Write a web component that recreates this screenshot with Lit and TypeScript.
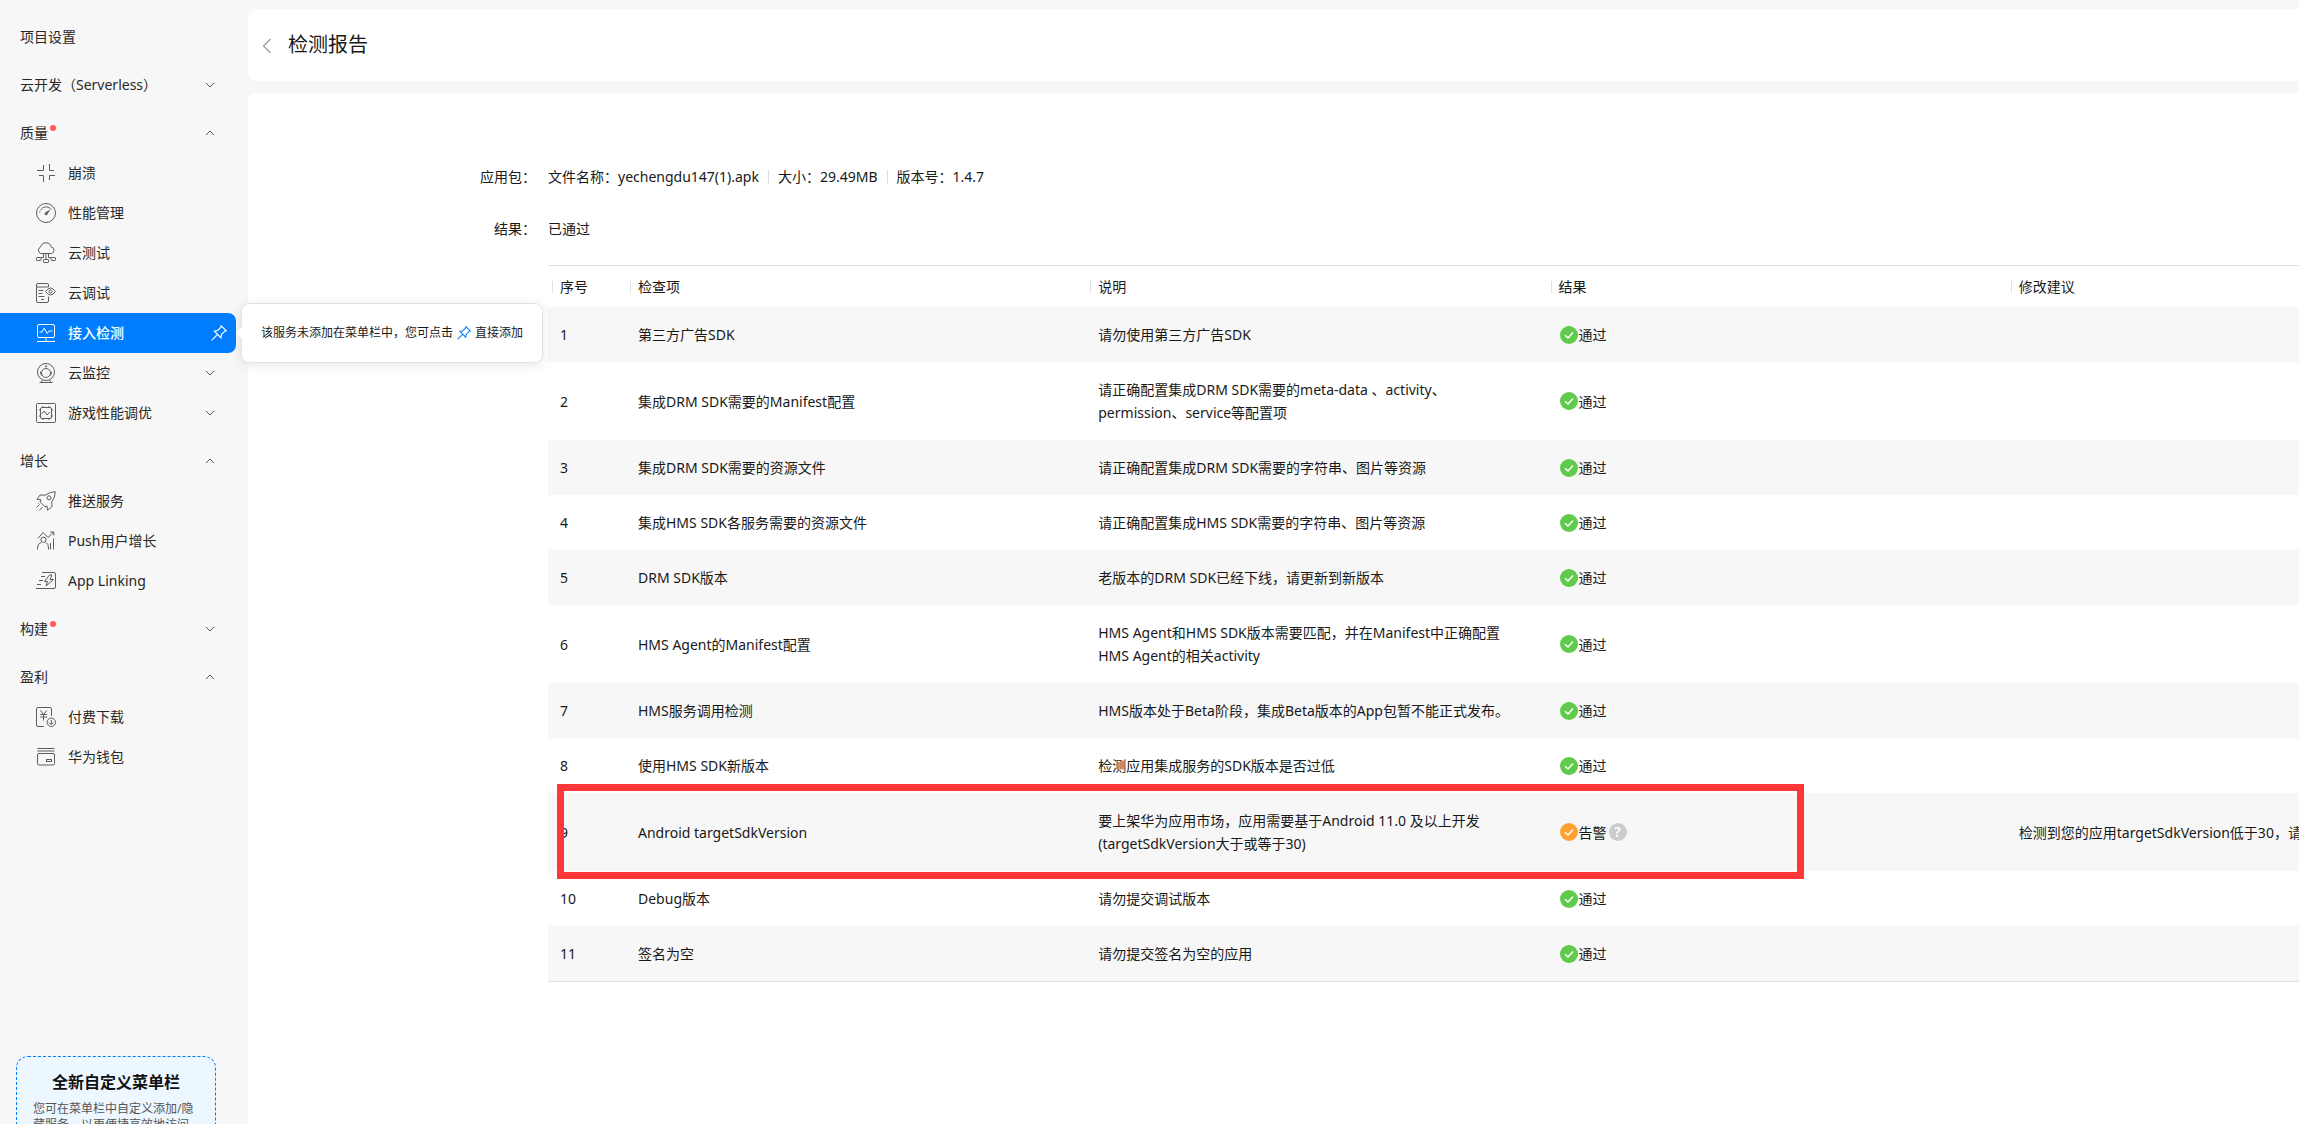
import { LitElement, html, svg, css, nothing, TemplateResult } from "lit";
import { customElement } from "lit/decorators.js";
import { classMap } from "lit/directives/class-map.js";

const icons: Record<string, TemplateResult> = {
  crash: svg`<path d="M1 7.5H7.5V2M13.5 1V7.5H18M3 12.5H7.5V19M19 12.5H13.5V17"/>`,
  gauge: svg`<circle cx="10" cy="10" r="9.5"/><path d="M4.6 7.2A6.4 6.4 0 0 1 15.4 6.6"/><path d="M3.6 9.6L4 8.4"/><path d="M14.4 6.4L9.4 9.2L11.2 11.6Z" fill="currentColor" stroke="none"/><circle cx="10" cy="10.8" r="1.4" fill="currentColor" stroke="none"/>`,
  cloudTest: svg`<path d="M4.6 10.5A3.6 3.6 0 0 1 4.7 3.9A5.4 5.4 0 0 1 15.2 3.9A3.4 3.4 0 0 1 15.6 10.5Z"/><path d="M10 10.5V16.4M7.5 10.5V14.5H5M12.5 10.5V14.5H15"/><rect x=".5" y="14.5" width="4.5" height="3" rx=".6"/><rect x="7.5" y="16.5" width="5" height="3" rx=".6"/><rect x="15" y="14.5" width="4.5" height="3" rx=".6"/>`,
  cloudDebug: svg`<path d="M12.5 13.5V18Q12.5 19.5 11 19.5H2Q.5 19.5.5 18V2Q.5.5 2 .5H11Q12.5.5 12.5 2V4M.5 4H12.5M2.5 7.5H7.5M2.5 10.5H6.5M2.5 13.5H8.5M5 16.5H8"/><path d="M9.5 8.5Q14.5 1.5 19.5 8.5Q14.5 15.5 9.5 8.5Z"/><circle cx="14.5" cy="8.5" r="1.5"/>`,
  monitor: svg`<rect x="1.5" y="1.5" width="17" height="13" rx="1.5"/><path d="M3.5 9H6L8.2 5L11.2 10.5L13 8H16.5M10 14.5V18.5M1 18.5H19"/>`,
  camera: svg`<circle cx="10" cy="9" r="8.5"/><circle cx="10" cy="10" r="4.5"/><circle cx="10" cy="3.4" r=".6" fill="currentColor"/><path d="M5.5 12.5A5.4 5.4 0 0 1 4.6 8.6M14.5 12.5A5.4 5.4 0 0 0 15.4 8.6M6.5 17L5 19.5M13.5 17L15 19.5M3.5 19.5H16.5"/>`,
  chip: svg`<rect x=".5" y=".5" width="19" height="19" rx="1"/><rect x="4.5" y="4.5" width="11" height="11" rx="1.5"/><path d="M6 10.5L8.2 8L11 12L14 9M7 3V4.5M13 3V4.5M7 15.5V17M13 15.5V17M3 7H4.5M3 13H4.5M15.5 7H17M15.5 13H17"/>`,
  rocket: svg`<path d="M19.3.7Q13 .8 9.5 4.2L4 4L1 8.4L5 8.8L4.2 11L9 15.8L11 15L11.6 19.2L16 15.6L15.8 10.6Q19 7 19.3.7Z"/><circle cx="13" cy="6.8" r="2"/><path d="M3.6 13.4L.5 16.6M6.6 16L3.4 19.4M2 12.6L3 11.6"/>`,
  growth: svg`<path d="M2 7.5L7 1.5L12 6.5L17.5 1.2M14.2 1H17.8V4.6"/><circle cx="7.5" cy="8.8" r="2.6"/><path d="M1.5 18.5V17Q1.7 12.5 5 11.5M10 11.5Q12.5 12.6 12.5 17V18.5M14.5 18.5V12M17.5 18.5V7.5"/>`,
  linking: svg`<path d="M6 1.5H18Q19.5 1.5 19.5 3V16Q19.5 17.5 18 17.5H0M5 5.5H9M3 9.5H7M1 13.5H5"/><path d="M13.5 4L8.5 10.5H11.5L10 15L17.5 8.5H14L16 4Z"/>`,
  paid: svg`<path d="M15.5 9V2Q15.5.5 14 .5H2Q.5.5.5 2V18Q.5 19.5 2 19.5H8M4.5 3.5L7.5 7.5L10.8 3.5M7.5 7.5V13.5M4.2 7.5H11M4.2 10H11"/><circle cx="15.3" cy="15.3" r="4.2"/><path d="M15.3 12.8V17.5M13.3 15.6L15.3 17.6L17.3 15.6"/>`,
  wallet: svg`<path d="M1.5 1.5H18.5M1.5 4H18.5"/><rect x="1.5" y="6.5" width="17" height="11.5" rx="1.5"/><rect x="10.5" y="12.5" width="5" height="2"/>`,
};

const pin = html`<svg class="pin" viewBox="0 0 16 16" aria-hidden="true"><path d="M10.2.8L15.2 5.8L13.6 6.4L10.6 9.4L9.9 12.7L3.4 6.2L6.7 5.5L9.7 2.5ZM6.4 9.6L.6 15.4"/></svg>`;

interface Item { label: string; icon: string; active?: boolean; more?: boolean }
interface Group { label: string; dot?: boolean; open?: boolean; plain?: boolean; items?: Item[] }

const groups: Group[] = [
  { label: "项目设置", plain: true },
  { label: "云开发（Serverless）" },
  {
    label: "质量", dot: true, open: true, items: [
      { label: "崩溃", icon: "crash" },
      { label: "性能管理", icon: "gauge" },
      { label: "云测试", icon: "cloudTest" },
      { label: "云调试", icon: "cloudDebug" },
      { label: "接入检测", icon: "monitor", active: true },
      { label: "云监控", icon: "camera", more: true },
      { label: "游戏性能调优", icon: "chip", more: true },
    ],
  },
  {
    label: "增长", open: true, items: [
      { label: "推送服务", icon: "rocket" },
      { label: "Push用户增长", icon: "growth" },
      { label: "App Linking", icon: "linking" },
    ],
  },
  { label: "构建", dot: true },
  {
    label: "盈利", open: true, items: [
      { label: "付费下载", icon: "paid" },
      { label: "华为钱包", icon: "wallet" },
    ],
  },
];

interface Check { name: string; desc: string[]; warn?: boolean; advice?: string }

const checks: Check[] = [
  { name: "第三方广告SDK", desc: ["请勿使用第三方广告SDK"] },
  { name: "集成DRM SDK需要的Manifest配置", desc: ["请正确配置集成DRM SDK需要的meta-data 、activity、", "permission、service等配置项"] },
  { name: "集成DRM SDK需要的资源文件", desc: ["请正确配置集成DRM SDK需要的字符串、图片等资源"] },
  { name: "集成HMS SDK各服务需要的资源文件", desc: ["请正确配置集成HMS SDK需要的字符串、图片等资源"] },
  { name: "DRM SDK版本", desc: ["老版本的DRM SDK已经下线，请更新到新版本"] },
  { name: "HMS Agent的Manifest配置", desc: ["HMS Agent和HMS SDK版本需要匹配，并在Manifest中正确配置", "HMS Agent的相关activity"] },
  { name: "HMS服务调用检测", desc: ["HMS版本处于Beta阶段，集成Beta版本的App包暂不能正式发布。"] },
  { name: "使用HMS SDK新版本", desc: ["检测应用集成服务的SDK版本是否过低"] },
  { name: "Android targetSdkVersion", desc: ["要上架华为应用市场，应用需要基于Android 11.0 及以上开发", "(targetSdkVersion大于或等于30)"], warn: true, advice: "检测到您的应用targetSdkVersion低于30，请" },
  { name: "Debug版本", desc: ["请勿提交调试版本"] },
  { name: "签名为空", desc: ["请勿提交签名为空的应用"] },
];

@customElement("side-menu")
class SideMenu extends LitElement {
  static styles = css`
    :host { display: flex; flex-direction: column; height: 100%; padding-top: 9px; box-sizing: border-box; color: #282828; }
    ul { list-style: none; margin: 0; padding: 0; }
    .group { padding-top: 8px; }
    .head { display: flex; align-items: center; width: 100%; height: 40px; padding: 0 32px 0 20px; border: 0; background: none; color: inherit; font: inherit; text-align: left; text-decoration: none; box-sizing: border-box; }
    .label { flex: 1; }
    .dot { display: inline-block; width: 6px; height: 6px; margin-left: 2px; border-radius: 50%; background: #ff5a5a; vertical-align: 7px; }
    .entry { position: relative; }
    .item { display: flex; align-items: center; gap: 12px; height: 40px; margin-right: 12px; padding: 0 20px 0 36px; color: inherit; text-decoration: none; }
    .item.active { padding-right: 9px; border-radius: 0 8px 8px 0; background: #007dff; color: #fff; font-weight: 500; }
    .icon { width: 20px; height: 20px; flex: none; fill: none; stroke: currentColor; stroke-width: 1; color: #5c5c5c; overflow: visible; }
    .active .icon { color: #fff; }
    .chevron { width: 12px; height: 12px; flex: none; fill: none; stroke: #555; stroke-width: 1; }
    .pin { width: 16px; height: 16px; flex: none; fill: none; stroke: currentColor; stroke-width: 1.2; overflow: visible; }
    .tip { position: absolute; left: 241px; top: -10px; display: flex; align-items: center; gap: 4px; height: 60px; padding: 0 19px; border: 1px solid #e1e4ee; border-radius: 8px; background: #fff; color: #191919; font-size: 12px; white-space: nowrap; box-sizing: border-box; box-shadow: 0 2px 12px rgba(0, 0, 0, 0.1); }
    .tip::before { content: ""; position: absolute; right: 100%; top: 23px; border: 6px solid transparent; border-right-color: #fff; border-left: 0; }
    .tip .pin { width: 14px; height: 14px; color: #007dff; }
    .promo { height: 68px; margin-top: auto; padding: 0 32px 0 16px; overflow: hidden; }
    .box { height: 140px; padding: 13px 16px; border: 1px dashed #007dff; border-radius: 12px; background: #edf7ff; box-sizing: border-box; }
    .box h2 { margin: 0 0 7px; color: #111; font-size: 16px; line-height: 24px; text-align: center; font-weight: 700; }
    .box p { margin: 0; color: #555; font-size: 12px; line-height: 16px; }
  `;

  private chevron(up: boolean) {
    return html`<svg class="chevron" viewBox="0 0 12 12" aria-hidden="true"><path d=${up ? "M2 8L6 4L10 8" : "M2 4L6 8L10 4"}></path></svg>`;
  }

  private item(i: Item) {
    return html`<li class="entry">
      <a href="#" class=${classMap({ item: true, active: !!i.active })}>
        <svg class="icon" viewBox="0 0 20 20" aria-hidden="true">${icons[i.icon]}</svg>
        <span class="label">${i.label}</span>
        ${i.more ? this.chevron(false) : nothing}${i.active ? pin : nothing}
      </a>
      ${i.active ? html`<div class="tip" role="tooltip"><span>该服务未添加在菜单栏中，您可点击</span>${pin}<span>直接添加</span></div>` : nothing}
    </li>`;
  }

  render() {
    return html`
      <ul>
        ${groups.map((g) => html`<li class="group">
          ${g.plain
            ? html`<a class="head" href="#">${g.label}</a>`
            : html`<button class="head" type="button"><span class="label">${g.label}${g.dot ? html`<i class="dot"></i>` : nothing}</span>${this.chevron(!!g.open)}</button>`}
          ${g.items ? html`<ul>${g.items.map((i) => this.item(i))}</ul>` : nothing}
        </li>`)}
      </ul>
      <div class="promo"><div class="box"><h2>全新自定义菜单栏</h2><p>您可在菜单栏中自定义添加/隐藏服务，以更便捷高效地访问</p></div></div>
    `;
  }
}

@customElement("check-table")
class CheckTable extends LitElement {
  static styles = css`
    :host { display: block; }
    table { width: calc(100% + 168px); table-layout: fixed; border-collapse: separate; border-spacing: 0; border-top: 1px solid #dfdfdf; border-bottom: 1px solid #dfdfdf; color: #191919; }
    .num { width: 78px; }
    th { height: 41px; padding: 0 4px; font-weight: 400; text-align: left; box-sizing: border-box; }
    .title { display: flex; align-items: center; gap: 7px; }
    .title::before { content: ""; width: 1px; height: 12px; background: #dfdfdf; }
    td { padding: 16px 12px; line-height: 23px; box-sizing: border-box; white-space: nowrap; }
    tr { position: relative; }
    tbody tr:nth-child(odd) { background: #f7f7f7; }
    .state { display: flex; align-items: center; }
    .badge { width: 20px; height: 20px; flex: none; }
    .help { display: grid; place-items: center; width: 18px; height: 18px; padding: 0; border: 0; border-radius: 50%; margin-left: 2px; background: #ccc; color: #fff; font: inherit; font-weight: 600; font-size: 14px; line-height: 18px; }
    .mark { position: absolute; z-index: 1; left: 9px; top: -9px; bottom: -8px; width: 65%; border: 7px solid #fd3737; box-sizing: border-box; pointer-events: none; }
  `;

  render() {
    return html`<table>
      <thead><tr>
        ${["序号", "检查项", "说明", "结果", "修改建议"].map((t, i) => html`<th scope="col" class=${i ? "" : "num"}><span class="title">${t}</span></th>`)}
      </tr></thead>
      <tbody>
        ${checks.map((c, i) => html`<tr>
          <td>${i + 1}${c.warn ? html`<span class="mark"></span>` : nothing}</td>
          <td>${c.name}</td>
          <td>${c.desc.map((d, n) => html`${n ? html`<br>` : nothing}${d}`)}</td>
          <td><span class="state">
            <svg class="badge" viewBox="0 0 20 20" aria-hidden="true"><circle cx="10" cy="10" r="9" fill=${c.warn ? "#ffa033" : "#5fca4c"}></circle><path d="M6 10.2L9 13L14 7.4" fill="none" stroke="#fff" stroke-width="1.5"></path></svg>
            ${c.warn ? html`告警<button class="help" type="button">?</button>` : "通过"}
          </span></td>
          <td>${c.advice ?? ""}</td>
        </tr>`)}
      </tbody>
    </table>`;
  }
}

@customElement("app-root")
class AppRoot extends LitElement {
  static styles = css`
    :host { display: flex; height: 100vh; overflow: hidden; background: #f7f7f7; color: #191919; font: 14px/20px "Noto Sans", "Noto Sans CJK SC", sans-serif; }
    .side { position: relative; z-index: 2; flex: none; width: 248px; }
    main { flex: 1; min-width: 0; display: flex; flex-direction: column; gap: 12px; padding-top: 9px; }
    header { display: flex; align-items: center; gap: 16px; height: 72px; flex: none; padding: 0 14px; border-radius: 8px 0 0 8px; background: #fff; box-sizing: border-box; }
    h1 { margin: 0; font-size: 20px; line-height: 28px; font-weight: 400; }
    .back { display: flex; padding: 0; border: 0; background: none; }
    .arrow { width: 10px; height: 16px; fill: none; stroke: #999; stroke-width: 1.2; }
    .report { flex: 1; min-height: 0; padding: 72px 0 0 232px; border-radius: 8px 0 0 0; background: #fff; overflow: hidden; }
    dl { display: grid; grid-template-columns: 56px 1fr; column-gap: 12px; row-gap: 28px; margin: 0 0 24px; line-height: 24px; }
    dt { text-align: right; }
    dd { display: flex; align-items: center; gap: 9px; margin: 0; }
    .sep { width: 1px; height: 14px; background: #dfdfdf; }
    .grid { padding-left: 68px; }
  `;

  render() {
    return html`
      <nav class="side"><side-menu></side-menu></nav>
      <main>
        <header>
          <button class="back" type="button" aria-label="返回"><svg class="arrow" viewBox="0 0 10 16"><path d="M8.5 2L1.5 9L8.5 16"></path></svg></button>
          <h1>检测报告</h1>
        </header>
        <section class="report">
          <dl>
            <dt>应用包：</dt>
            <dd><span>文件名称：yechengdu147(1).apk</span><i class="sep"></i><span>大小：29.49MB</span><i class="sep"></i><span>版本号：1.4.7</span></dd>
            <dt>结果：</dt>
            <dd>已通过</dd>
          </dl>
          <check-table class="grid"></check-table>
        </section>
      </main>
    `;
  }
}
